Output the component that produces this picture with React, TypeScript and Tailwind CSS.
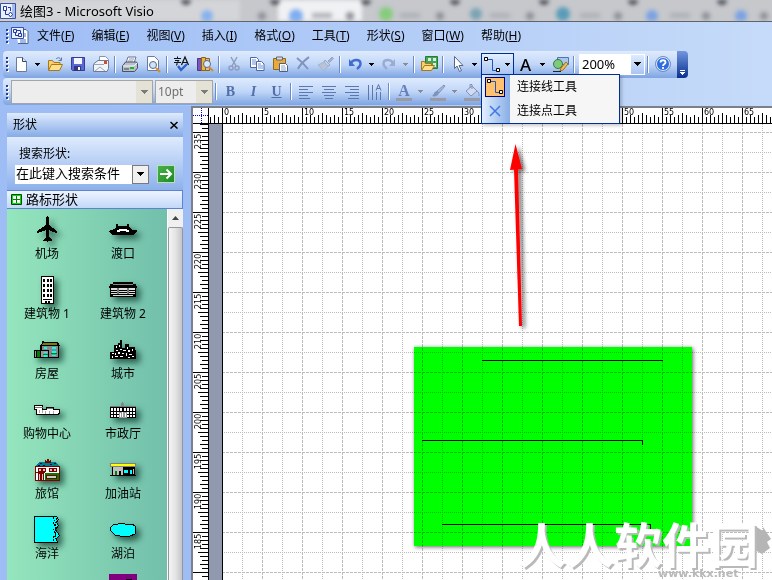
import { ReactNode } from "react";
import clsx from "clsx";

const menus = [
  { label: "文件", hotkey: "F" },
  { label: "编辑", hotkey: "E" },
  { label: "视图", hotkey: "V" },
  { label: "插入", hotkey: "I" },
  { label: "格式", hotkey: "O" },
  { label: "工具", hotkey: "T" },
  { label: "形状", hotkey: "S" },
  { label: "窗口", hotkey: "W" },
  { label: "帮助", hotkey: "H" },
];

const PAGE_LEFT = 13;
const rulerX = Array.from({ length: 14 }, (_, i) => i * 5);
const rulerY = Array.from({ length: 11 }, (_, i) => 235 - i * 5);

function Icon({ children, size = 18 }: { children: ReactNode; size?: number }) {
  return (
    <svg width={size} height={size} viewBox={`0 0 ${size} ${size}`} fill="none" aria-hidden="true">
      {children}
    </svg>
  );
}

function Caret({ color = "#000" }: { color?: string }) {
  return (
    <svg width="5" height="3" viewBox="0 0 5 3" shapeRendering="crispEdges" aria-hidden="true">
      <path d="M0 0h5v1H0zM1 1h3v1H1zM2 2h1v1H2z" fill={color} />
    </svg>
  );
}

function WideCaret({ color = "#000" }: { color?: string }) {
  return (
    <svg width="7" height="4" viewBox="0 0 7 4" shapeRendering="crispEdges" aria-hidden="true">
      <path d="M0 0h7v1H0zM1 1h5v1H1zM2 2h3v1H2zM3 3h1v1H3z" fill={color} />
    </svg>
  );
}

function ToolButton({ label, children }: { label: string; children: ReactNode }) {
  return (
    <button type="button" aria-label={label} title={label} className="flex h-6 w-[23px] shrink-0 items-center justify-center">
      {children}
    </button>
  );
}

function DropButton({ label, disabled }: { label: string; disabled?: boolean }) {
  return (
    <button type="button" aria-label={label} className="flex h-5 w-[11px] shrink-0 items-center justify-center">
      <Caret color={disabled ? "#8b8b95" : "#000"} />
    </button>
  );
}

function Separator() {
  return (
    <div className="flex w-[6px] shrink-0 justify-center">
      <div className="h-[17px] w-[2px] border-r border-white bg-[#6a8ccb]" />
    </div>
  );
}

function Grip() {
  return (
    <svg width="6" height="16" viewBox="0 0 6 16" shapeRendering="crispEdges" className="shrink-0" aria-hidden="true">
      {[1, 5, 9, 13].map((y) => (
        <g key={y}>
          <rect x="4" y={y + 1} width="2" height="2" fill="#fff" />
          <rect x="3" y={y} width="2" height="2" fill="#27418f" />
        </g>
      ))}
    </svg>
  );
}

function AppIcon() {
  return (
    <Icon size={16}>
      <path d="M.5.500h15v15H.5z" fill="#e9effc" stroke="#3653a8" />
      <path d="M12 1h3v14h-3z" fill="#a9bdec" />
      <path d="M3.500 3.500h3v4h-3z" fill="#fff" stroke="#2038a0" />
      <path d="M5.500 8v3.500H9M8 4.500h2.500V8" stroke="#2038a0" />
      <path d="m10.500 9 2 2.500-2 2.500-2-2.500z" fill="#fff" stroke="#2038a0" />
    </Icon>
  );
}

function DocIcon() {
  return (
    <Icon>
      <path d="M5 2.500h10l2 2v12H7" fill="#fff" stroke="#4a6292" />
      <path d="M13 7h2M13 9h2M9 13h6M9 15h6" stroke="#4c70c8" />
      <path d="M.5.500h12v11H.5z" fill="#e9effc" stroke="#3653a8" />
      <path d="M2.500 2.500h3v3h-3zM7.500 6.500h3v3h-3zM4.500 6v2.500H7M6 3.500h3.500V6" stroke="#2038a0" />
    </Icon>
  );
}

const icons = {
  blank: (
    <Icon>
      <path d="M4.500 2.500h6l4 4v10h-10z" fill="#fff" stroke="#6b7ba0" />
      <path d="M10.500 2.500v4h4" fill="#dbe5f7" stroke="#33446e" />
    </Icon>
  ),
  open: (
    <Icon>
      <path d="M2.500 15V5.500h4l1.500 2h6V10" fill="#f6d06a" stroke="#a9781c" />
      <path d="m2.500 15.500 3-6h11l-3 6z" fill="#ffe08a" stroke="#a9781c" />
      <path d="M10 4c2-2 4-1.500 5 1m.5-2.500v3h-3" stroke="#5c76a8" />
    </Icon>
  ),
  save: (
    <Icon>
      <path d="M2.500 2.500h13v13h-12l-1-1z" fill="#5868d4" stroke="#383c98" />
      <path d="M5 3h8v6H5z" fill="#f5f6fb" />
      <path d="M5 11h7v5H5z" fill="#34377e" />
      <path d="M9 12h2v3H9z" fill="#fff" />
    </Icon>
  ),
  mail: (
    <Icon>
      <path d="M7.500 6V1.500h6l3 3V10" fill="#fff" stroke="#8794ad" />
      <path d="M1.500 9 6 5.500h10.500v8L15 16.500H1.500z" fill="#f1f3f8" stroke="#6f7b96" />
      <path d="M1.500 9.500H12M3 16l5-4 5 4" stroke="#9aa5ba" />
      <path d="M12 6h3v3h-3z" fill="#d34a34" />
    </Icon>
  ),
  print: (
    <Icon>
      <path d="m5 8 2-6h8l-2 6z" fill="#fff" stroke="#6b7590" />
      <path d="M8 4h5M7 6h5" stroke="#8d97b0" />
      <path d="m1.500 11 3-4h11l1 2v4l-3 3.500h-12z" fill="#b9c0cc" stroke="#4a5163" />
      <path d="M2 11h11l3-3" stroke="#f4f6fa" />
      <path d="M9 12h4v2H9z" fill="#22b322" />
      <path d="M3 14h5" stroke="#3f4658" />
    </Icon>
  ),
  preview: (
    <Icon>
      <path d="M3.500 1.500h7l4 4v10h-11z" fill="#fff" stroke="#6b7ba0" />
      <circle cx="9" cy="10" r="3.500" fill="#cfe4f8" stroke="#55698f" />
      <path d="m12 13 4 4" stroke="#d98a2b" strokeWidth="2" />
    </Icon>
  ),
  spelling: (
    <Icon>
      <path d="M1 3.500h7M4.500 1.500v2M2 5.500h4l-2 2v2.500H3M1 7.500h7" stroke="#111" />
      <path d="m8.500 10 3.500-8 3.500 8M10 7.500h4" stroke="#111" strokeWidth="1.200" />
      <path d="m5 11 3 4 6-6" stroke="#2f62c8" strokeWidth="2.400" />
    </Icon>
  ),
  research: (
    <Icon>
      <path d="M1.500 3.500h4v12h-4z" fill="#7a58b8" stroke="#4c3880" />
      <path d="M5.500 2.500h4v13h-4z" fill="#efb43d" stroke="#8d6215" />
      <path d="M9.500 3.500h4v12h-4z" fill="#d8c090" stroke="#8d6215" />
      <circle cx="11" cy="9" r="3.500" fill="#d8ebfb" stroke="#55698f" />
      <path d="m13 12 4 4" stroke="#d98a2b" strokeWidth="2" />
    </Icon>
  ),
  cut: (
    <Icon>
      <path d="m6 2 5 9M12 2l-5 9" stroke="#8e9dbf" strokeWidth="1.500" />
      <circle cx="6" cy="13" r="2" stroke="#8e9dbf" strokeWidth="1.500" />
      <circle cx="12" cy="13" r="2" stroke="#8e9dbf" strokeWidth="1.500" />
    </Icon>
  ),
  copy: (
    <Icon>
      <path d="M2.500 2.500h6l2 2v8h-8z" fill="#fff" stroke="#4a68a8" />
      <path d="M4 5h4M4 7h4M4 9h4" stroke="#6d8fd6" />
      <path d="M8.500 6.500h5l2.500 2.500v6.500H8.500z" fill="#fff" stroke="#4a68a8" />
      <path d="M10 9h3M10 11h5M10 13h5" stroke="#6d8fd6" />
    </Icon>
  ),
  paste: (
    <Icon>
      <path d="M2.500 3.500h12v11h-12z" fill="#e8ab3a" stroke="#936818" />
      <path d="M5.500 2h6v3h-6z" fill="#d8dce6" stroke="#666" />
      <path d="M8.500 8.500h6l2 2v6h-8z" fill="#fff" stroke="#4a5f8c" />
      <path d="M10 11h4M10 13h5M10 15h5" stroke="#8ea3cf" />
    </Icon>
  ),
  remove: (
    <Icon>
      <path d="M3 3c4 3 7 6 11 11M15 2C10 6 6 9 4 14" stroke="#8094c0" strokeWidth="2" />
    </Icon>
  ),
  brush: (
    <Icon>
      <path d="m11 6 4-4 1.500 1.500-4 4z" fill="#a6b3ce" stroke="#98a6c4" />
      <path d="m8 5 5 5-2 1-4-4z" fill="#c7d0e2" stroke="#98a6c4" />
      <path d="m7 7 4 4-4 5-6-6z" fill="#b8c3da" stroke="#a6b3ce" />
    </Icon>
  ),
  undo: (
    <Icon>
      <path d="M5 8c2-4 9-4 9.500 0 .5 3-1 4-3.500 6" stroke="#3f6dd0" strokeWidth="2.400" />
      <path d="M3 4v7h6z" fill="#3f6dd0" />
    </Icon>
  ),
  redo: (
    <Icon>
      <path d="M13 8c-2-4-9-4-9.500 0-.5 3 1 4 3.500 6" stroke="#9aacd2" strokeWidth="2.400" />
      <path d="M15 4v7H9z" fill="#9aacd2" />
    </Icon>
  ),
  stencils: (
    <Icon>
      <path d="M5.500 1.500h12v12h-12z" fill="#44a55a" stroke="#267a3c" />
      <path d="M8 3h3v3H8zM13 3h3v3h-3zM13 8h3v4h-3z" fill="#d5f1da" />
      <path d="M1.500 15V6.500h3l1 2h6V10" fill="#f6d06a" stroke="#a9781c" />
      <path d="m1.500 15.500 3-5h10l-3 5z" fill="#ffe08a" stroke="#a9781c" />
    </Icon>
  ),
  pointer: (
    <Icon>
      <path d="M5.500 1.500v12l2.500-2.500 2.500 5.500 2-1-2.500-5h4z" fill="#fff" stroke="#56668c" />
    </Icon>
  ),
  connector: (
    <Icon>
      <path d="M5 3.500h4.500v11H13" stroke="#2358b8" />
      <path d="M1.500 1.500h3v3h-3zM13.500 12.500h3v3h-3z" fill="#fff" stroke="#000" />
    </Icon>
  ),
  drawing: (
    <Icon>
      <path d="M6.500 2.500h11v7h-11z" fill="#a9c6ef" stroke="#4d74b4" />
      <circle cx="7" cy="9" r="4.500" fill="#7fc97a" stroke="#2f7d3c" />
      <path d="m10 13 5-6 2 2-5 6-3 1z" fill="#f4bd5c" stroke="#9c6f24" />
      <path d="M2 16.500h8" stroke="#222" />
    </Icon>
  ),
  help: (
    <Icon>
      <circle cx="9" cy="9" r="6.500" fill="#2f6de0" stroke="#e8f0ff" />
      <circle cx="9" cy="9" r="7.500" stroke="#6b8cc8" />
      <path d="M6.500 7.500c0-3 5-3 5 0 0 1.500-2.500 1.500-2.500 3.500M9 12v2" stroke="#fff" strokeWidth="1.800" />
    </Icon>
  ),
  alignLeft: (
    <Icon>
      <path d="M2 3.500h14M2 6.500h9M2 9.500h14M2 12.500h9M2 15.500h11" stroke="#5c77ab" />
    </Icon>
  ),
  alignCenter: (
    <Icon>
      <path d="M2 3.500h14M4 6.500h10M2 9.500h14M4 12.500h10M5 15.500h8" stroke="#5c77ab" />
    </Icon>
  ),
  alignRight: (
    <Icon>
      <path d="M2 3.500h14M7 6.500h9M2 9.500h14M7 12.500h9M5 15.500h11" stroke="#5c77ab" />
    </Icon>
  ),
  vertical: (
    <Icon>
      <path d="M2.500 2v15M6.500 2v15M10.500 9v8M14.500 9v8" stroke="#5c77ab" />
      <path d="m10 7.500 2.500-6 2.500 6M11 5.500h3" stroke="#5c77ab" />
    </Icon>
  ),
  fontColor: (
    <Icon>
      <path d="M1 15h16v3H1z" fill="#9b9ba3" />
      <text x="9" y="13" textAnchor="middle" fill="#6580b5" className="font-['Liberation_Serif'] text-[16px] font-bold">A</text>
    </Icon>
  ),
  lineColor: (
    <Icon>
      <path d="M1 15h16v3H1z" fill="#9b9ba3" />
      <path d="m8 8 7-6 1 1-6 7z" fill="#a9b7d4" stroke="#8495bd" />
      <path d="M3 13c2-1 2-5 5-5l2 2c-1 3-4 4-7 3z" fill="#7f92bd" />
    </Icon>
  ),
  fillColor: (
    <Icon>
      <path d="M1 15h16v3H1z" fill="#9b9ba3" />
      <path d="m3 8 6-5 5 5-6 5z" fill="#d3dcee" stroke="#7f92bd" />
      <path d="M9 6V1.500H7V5M14 8c2 1 2 3 2 5" stroke="#7f92bd" />
    </Icon>
  ),
};

type Stencil = { name: string; width: number; height: number; art: ReactNode };

const stencils: Stencil[] = [
  {
    name: "机场",
    width: 21,
    height: 27,
    art: (
      <path d="M10 0h1v1h1v8l8 6v2h-1l-7-3v7l3 3v1h-4v1h-1v-1H6v-1l3-3v-7l-8 3H0v-2l9-6V1h1z" fill="#000" />
    ),
  },
  {
    name: "渡口",
    width: 28,
    height: 12,
    art: (
      <>
        <path d="M7 0h2v2h9V0h2v3l3 3h5v1l-4 4H4L0 8V7l5-2 2-2z" fill="#000" />
        <path d="M10 5h8v1h2v2h-3V7h-6v1H8V6h2z" fill="#fff" />
      </>
    ),
  },
  {
    name: "建筑物 1",
    width: 13,
    height: 28,
    art: (
      <>
        <path d="M0 0h13v28H0z" fill="#000" />
        <path d="M1 1h11v26H1z" fill="#fff" />
        {[3, 8, 13, 18].map((y) => (
          <path key={y} d={`M2 ${y}h2v3H2zM6 ${y}h2v3H6zM9 ${y}h2v3H9z`} fill="#000" />
        ))}
        <path d="M2 23h9v1H2zM4 25h2v2H4zM7 25h2v2H7z" fill="#000" />
      </>
    ),
  },
  {
    name: "建筑物 2",
    width: 28,
    height: 16,
    art: (
      <>
        <path d="M4 0h20v2h3v2h1v2h-1v9H1V6H0V4h1V2h3z" fill="#000" />
        <path d="M4 2h20v1H4z" fill="#888" />
        <path d="M2 6h24v2H2zM2 9h24v1H2zM2 11h24v1H2zM4 13h20v1H4z" fill="#ddd" />
        <path d="M8 6h2v6H8zM18 6h2v6h-2z" fill="#777" />
      </>
    ),
  },
  {
    name: "房屋",
    width: 26,
    height: 17,
    art: (
      <>
        <path d="M6 4h19v13H6z" fill="#000" />
        <path d="M8 5h16v11H8z" fill="#888" />
        <path d="M8 0h2v1h14l2 4H6l2-3z" fill="#000" />
        <path d="M9 2h14v2H8z" fill="#7d7d00" />
        <path d="M0 9h15v8H0z" fill="#000" />
        <path d="M1 10h1v6H1zM7 10h7v6H7z" fill="#999" />
        <path d="M3 10h3v6H3z" fill="#008000" />
        <path d="M10 6h3v2h-3zM18 6h4v2h-4zM10 11h3v1h-3zM10 14h3v2h-3zM18 10h4v2h-4zM18 14h4v1h-4z" fill="#0ff" />
        <path d="M9 13h5v1H9zM17 12h6v1h-6z" fill="#008000" />
      </>
    ),
  },
  {
    name: "城市",
    width: 26,
    height: 19,
    art: (
      <>
        <path d="M0 12h4V5h4V3h2V0h2v8h3V4h4v3h6v3h1v9H0z" fill="#000" />
        <path
          d="M6 6h1v2H6zM9 5h1v2H9zM6 10h2v1H6zM10 9h2v1h-2zM2 13h2v1H2zM5 13h1v2H5zM2 16h1v2H2zM5 16h3v1H5zM8 12h2v2H8zM13 10h3v1h-3zM17 7h1v2h-1zM18 10h2v2h-2zM22 9h1v2h-1zM12 13h2v1h-2zM16 13h1v3h-1zM19 14h3v1h-3zM10 16h3v1h-3zM18 17h2v1h-2zM22 16h2v1h-2z"
          fill="#fff"
        />
      </>
    ),
  },
  {
    name: "购物中心",
    width: 26,
    height: 10,
    art: (
      <>
        <path d="M.5.500h8v4h4v-2h7v2h6v4l-2 1H2.500v-5h-2z" fill="#fff" stroke="#000" />
        <path d="M1 2h8v1H1zM13 3h6v1h-6z" fill="#777" />
        <path d="M5 5v3M8 5v3M11 6v3M15 6v3M19 6v3" stroke="#aaa" />
      </>
    ),
  },
  {
    name: "市政厅",
    width: 26,
    height: 16,
    art: (
      <>
        <path d="M12 0h1v1h1v3h-3V1h1z" fill="#888" />
        <path d="M0 4h26v12H0z" fill="#000" />
        <path d="M0 4h26v1H0z" fill="#777" />
        {[1, 4, 7, 10, 14, 17, 20, 23].map((x) => (
          <path key={x} d={`M${x} 6h2v3h-2zM${x} 10h2v2h-2zM${x} 13h2v2h-2z`} fill="#fff" />
        ))}
        <path d="M9 10h8v6H9z" fill="#999" />
        <path d="M10 11h1v4h-1zM12 10h1v5h-1zM15 11h1v4h-1z" fill="#fff" />
      </>
    ),
  },
  {
    name: "旅馆",
    width: 25,
    height: 22,
    art: (
      <>
        <path d="M4 3h17l3 4H1z" fill="#008080" />
        <path d="M5 4h2v1H5zM10 3h2v1h-2zM15 5h2v1h-2zM19 4h2v1h-2zM3 6h2v1H3zM8 6h2v1H8z" fill="#000080" />
        <path d="M10 1h1v1h1V0h2v2h1V1h1v3h-6z" fill="#800000" />
        <path d="M0 7h25v15H0z" fill="#800000" />
        <path d="M1 8h23v13H1z" fill="#fff" />
        <path d="M10 14h14v7H10z" fill="#008000" />
        <path d="M3 9h8v4H3zM14 9h8v4h-8zM3 14h6v7H3zM11 16h11v4H11zM1 13h9v1H1z" fill="#800000" />
        <path d="M4 10h2v2H4zM8 10h2v2H8zM15 10h2v2h-2zM19 10h2v2h-2zM4 15h1v6H4zM7 15h1v6H7zM12 17h9v2h-9z" fill="#ccc" />
      </>
    ),
  },
  {
    name: "加油站",
    width: 26,
    height: 13,
    art: (
      <>
        <path d="M0 0h26v4H0z" fill="#808080" />
        <path d="M1 1h24v2H1z" fill="#ff0" />
        <path d="M2 4h11v8H2z" fill="#c0c0c0" />
        <path d="M13 4h12v8H13zM0 12h26v1H0zM2 4h1v9H2zM9 8h2v4H9z" fill="#000" />
        <path d="M14 7h4v3h-4zM20 7h2v4h-2z" fill="#0ff" />
        <path d="M5 8h2v4H5z" fill="#008000" />
        <path d="M23 6h1v5h-1z" fill="#c0c0c0" />
      </>
    ),
  },
  {
    name: "海洋",
    width: 26,
    height: 27,
    art: (
      <>
        <path d="M.5.500h22l2 3-2 3 2 3-3 4 2 3 2 3-3 3 1 4H.5z" fill="#0ff" stroke="#000" />
        <path d="m19 1 2 3-2 3 3 4-3 3 3 4-3 4v4M22 2v4l-1 2 1 3-1 3 1 4-1 5" stroke="#000" strokeDasharray="2 1" />
      </>
    ),
  },
  {
    name: "湖泊",
    width: 28,
    height: 16,
    art: <path d="M1 6 4 3l5-1 3-1 4 1h7l3 2 1 4-1 4-5 2-5 1-5-1-5-1-4-4z" fill="#0ff" stroke="#000" />,
  },
];

function TitleBar() {
  return (
    <header className="relative h-[22px] shrink-0 overflow-hidden border-b border-[#5f6470] bg-[#c6c8cc]">
      <svg className="absolute inset-0 h-full w-full blur-[2px]" aria-hidden="true">
        <rect x="-10" y="-6" width="250" height="34" fill="#d4d5d8" />
        <rect x="278" y="-4" width="84" height="34" rx="8" fill="#f0f1f3" />
        <circle cx="207" cy="16" r="6" fill="#86b2ee" />
        <circle cx="296" cy="16" r="7" fill="#7fadf0" />
        <circle cx="386" cy="14" r="7" fill="#86cc7c" />
        <circle cx="476" cy="14" r="6" fill="#7ba3b4" />
        <circle cx="563" cy="14" r="7" fill="#5a9cb8" />
        <circle cx="652" cy="16" r="6" fill="#7ba2e2" />
        <circle cx="741" cy="16" r="6" fill="#7ba2e2" />
        {[186, 275, 366, 455, 544, 633, 722].map((x) => (
          <circle key={x} cx={x} cy="0" r="5" fill="#45484f" />
        ))}
        {[262, 350, 440, 530, 618, 706, 764].map((x) => (
          <circle key={x} cx={x} cy="16" r="4" fill="#8e9197" />
        ))}
        {[322, 410, 500, 590, 680].map((x) => (
          <rect key={x} x={x - 10} y="13" width="20" height="5" fill="#aeb1b6" />
        ))}
      </svg>
      <div className="relative flex h-[21px] items-center gap-1">
        <AppIcon />
        <h1 className="text-[13px] leading-5 whitespace-nowrap">绘图3 - Microsoft Visio</h1>
      </div>
    </header>
  );
}

function MenuBar() {
  return (
    <nav className="flex h-[29px] shrink-0 items-center pb-[2px] pl-[3px] text-[12px]">
      <Grip />
      <div className="ml-[2px] w-[26px]">
        <DocIcon />
      </div>
      <div className="flex gap-[17px]">
        {menus.map((menu) => (
          <button key={menu.label} type="button" className="whitespace-nowrap">
            {menu.label}(<u>{menu.hotkey}</u>)
          </button>
        ))}
      </div>
    </nav>
  );
}

function ConnectorMenu() {
  return (
    <div className="absolute top-5 -left-px z-10 w-[139px] border border-[#002d96] bg-[#f6f6f6] shadow-[2px_2px_3px_rgba(0,0,0,0.2)]" role="menu">
      <button type="button" role="menuitem" className="flex h-6 w-full items-center bg-linear-to-r from-[#e3efff] to-[#88aee5] bg-[length:28px_100%] bg-no-repeat text-[12px]">
        <span className="ml-[3px] flex h-5 w-5 items-center justify-center border border-[#000080] bg-[#ffc06f]">{icons.connector}</span>
        <span className="ml-3">连接线工具</span>
      </button>
      <button type="button" role="menuitem" className="flex h-6 w-full items-center bg-linear-to-r from-[#e3efff] to-[#88aee5] bg-[length:28px_100%] bg-no-repeat text-[12px]">
        <span className="ml-[3px] flex h-5 w-5 items-center justify-center">
          <Icon size={12}>
            <path d="m1 1 10 10M11 1 1 11" stroke="#3f78e8" strokeWidth="1.500" />
          </Icon>
        </span>
        <span className="ml-3">连接点工具</span>
      </button>
    </div>
  );
}

function StandardToolbar() {
  return (
    <div className="flex h-[27px] shrink-0 pl-[3px]">
      <div className="flex items-center rounded-l-sm bg-linear-to-b from-[#dfebfd] via-[#c0d6f8] to-[#7ea4e2] pb-px">
        <Grip />
        <ToolButton label="新建">{icons.blank}</ToolButton>
        <DropButton label="新建选项" />
        <ToolButton label="打开">{icons.open}</ToolButton>
        <ToolButton label="保存">{icons.save}</ToolButton>
        <ToolButton label="邮件">{icons.mail}</ToolButton>
        <Separator />
        <ToolButton label="打印">{icons.print}</ToolButton>
        <ToolButton label="打印预览">{icons.preview}</ToolButton>
        <Separator />
        <ToolButton label="拼写检查">{icons.spelling}</ToolButton>
        <ToolButton label="信息检索">{icons.research}</ToolButton>
        <Separator />
        <ToolButton label="剪切">{icons.cut}</ToolButton>
        <ToolButton label="复制">{icons.copy}</ToolButton>
        <ToolButton label="粘贴">{icons.paste}</ToolButton>
        <ToolButton label="删除">{icons.remove}</ToolButton>
        <ToolButton label="格式刷">{icons.brush}</ToolButton>
        <Separator />
        <ToolButton label="撤消">{icons.undo}</ToolButton>
        <DropButton label="撤消选项" />
        <ToolButton label="恢复">{icons.redo}</ToolButton>
        <DropButton label="恢复选项" disabled />
        <Separator />
        <ToolButton label="形状模具">{icons.stencils}</ToolButton>
        <Separator />
        <ToolButton label="指针工具">{icons.pointer}</ToolButton>
        <DropButton label="指针选项" />
        <div className="relative ml-px flex h-[22px] items-center border border-b-0 border-[#002d96] bg-linear-to-b from-[#e3efff] to-[#a5c3f2]">
          <button type="button" aria-label="连接线工具" className="flex w-5 justify-center">
            {icons.connector}
          </button>
          <DropButton label="连接线选项" />
          <ConnectorMenu />
        </div>
        <ToolButton label="文本工具">
          <span className="font-['Noto_Sans',sans-serif] text-[17px] leading-none font-medium">A</span>
        </ToolButton>
        <DropButton label="文本选项" />
        <ToolButton label="绘图工具">{icons.drawing}</ToolButton>
        <Separator />
        <div className="ml-[2px] grid h-[21px] w-[66px] items-center border border-white bg-white">
          <select aria-label="显示比例" className="col-start-1 row-start-1 h-full w-full appearance-none pl-[2px] text-[13px] leading-4">
            <option>200%</option>
          </select>
          <span className="pointer-events-none col-start-1 row-start-1 flex h-full w-[13px] items-center justify-center justify-self-end bg-linear-to-b from-[#dfebfd] to-[#a9c5f1]">
            <WideCaret />
          </span>
        </div>
        <Separator />
        <ToolButton label="帮助">{icons.help}</ToolButton>
        <div className="w-[3px]" />
      </div>
      <button type="button" aria-label="工具栏选项" className="flex w-[11px] flex-col items-center justify-end gap-px rounded-r-sm bg-linear-to-b from-[#7396dd] to-[#0a2f90] pb-[3px]">
        <span className="h-px w-[5px] bg-white" />
        <Caret color="#fff" />
      </button>
    </div>
  );
}

function FormatToolbar() {
  return (
    <div className="mb-px flex h-[27px] shrink-0 items-center pl-[3px]">
      <div className="flex h-full items-center rounded-l-sm bg-linear-to-b from-[#dfebfd] via-[#c0d6f8] to-[#7ea4e2]">
        <Grip />
        <div className="ml-[2px] grid h-6 w-[142px] items-center border border-[#a5a5a5] bg-[#ededed]">
          <select aria-label="字体" disabled className="col-start-1 row-start-1 h-full w-full appearance-none text-[12px]">
            <option />
          </select>
          <span className="pointer-events-none col-start-1 row-start-1 flex h-full w-4 items-center justify-center justify-self-end bg-[#e4e2d5]">
            <WideCaret color="#7b7b7b" />
          </span>
        </div>
        <div className="ml-[2px] grid h-6 w-[58px] items-center border border-[#a5a5a5] bg-[#ededed]">
          <select aria-label="字号" disabled className="col-start-1 row-start-1 h-full w-full appearance-none pl-[2px] text-[12px] leading-4 text-[#6f6f6f]">
            <option>10pt</option>
          </select>
          <span className="pointer-events-none col-start-1 row-start-1 flex h-full w-4 items-center justify-center justify-self-end bg-[#e4e2d5]">
            <WideCaret color="#7b7b7b" />
          </span>
        </div>
        <Separator />
        <div className="flex font-['Liberation_Serif',serif] text-[14px] font-bold text-[#526fa8]">
          <ToolButton label="加粗">B</ToolButton>
          <ToolButton label="倾斜">
            <i>I</i>
          </ToolButton>
          <ToolButton label="下划线">
            <u>U</u>
          </ToolButton>
        </div>
        <Separator />
        <ToolButton label="左对齐">{icons.alignLeft}</ToolButton>
        <ToolButton label="居中">{icons.alignCenter}</ToolButton>
        <ToolButton label="右对齐">{icons.alignRight}</ToolButton>
        <ToolButton label="文字方向">{icons.vertical}</ToolButton>
        <Separator />
        <ToolButton label="字体颜色">{icons.fontColor}</ToolButton>
        <DropButton label="字体颜色选项" disabled />
        <ToolButton label="线条颜色">{icons.lineColor}</ToolButton>
        <DropButton label="线条颜色选项" disabled />
        <ToolButton label="填充颜色">{icons.fillColor}</ToolButton>
        <DropButton label="填充颜色选项" disabled />
      </div>
    </div>
  );
}

function ShapesPanel() {
  return (
    <aside className="flex w-[191px] shrink-0 flex-col bg-[#9ebdf5] pt-[7px] pr-2 pl-[7px]">
      <div className="flex h-6 shrink-0 items-center justify-between bg-linear-to-b from-[#dfebfd] to-[#86abe6] pr-px pl-[6px]">
        <h2 className="text-[12px]">形状</h2>
        <button type="button" aria-label="关闭" className="flex h-4 w-4 items-center justify-center">
          <Icon size={8}>
            <path d="m.5 1 7 6.500M7.500 1l-7 6.500" stroke="#000" strokeWidth="1.500" />
          </Icon>
        </button>
      </div>
      <div className="h-[53px] shrink-0 bg-linear-to-b from-[#dfebfd] to-[#8db0eb] pt-[9px] pl-2">
        <label htmlFor="shape-search" className="block pl-1 text-[12px] leading-4">
          搜索形状:
        </label>
        <div className="mt-[2px] flex h-5 items-center">
          <input id="shape-search" defaultValue="在此键入搜索条件" className="h-[19px] w-[117px] bg-white pl-px text-[13px]" />
          <button type="button" aria-label="最近的搜索" className="flex h-[19px] w-[17px] items-center justify-center border border-[#7a7a7a] bg-[#f0f0f0]">
            <WideCaret />
          </button>
          <button type="button" aria-label="搜索" className="ml-2 flex h-[18px] w-[18px] items-center justify-center border border-[#b9e0b5] bg-linear-to-br from-[#48b24a] to-[#1d8a22]">
            <Icon size={14}>
              <path d="M1 7h11M7.500 2.500 12 7l-4.500 4.500" stroke="#fff" strokeWidth="2" />
            </Icon>
          </button>
        </div>
      </div>
      <button type="button" className="flex h-[19px] shrink-0 items-center gap-1 border-y border-r border-[#5c83cf] bg-linear-to-b from-[#edf4ff] to-[#c3d8f8] pl-1 text-[13px]">
        <Icon size={11}>
          <path d="M.5.500h10v10H.5z" fill="#00e000" stroke="#004b00" />
          <path d="M2 2h7v7H2z" fill="#fff" />
          <path d="M5.500 2v7M2 5.500h7" stroke="#008000" />
        </Icon>
        路标形状
      </button>
      <div className="flex min-h-0 flex-1">
        <div className="min-w-0 flex-1 overflow-hidden bg-linear-to-r from-[#94e6bd] to-[#72bfab] pt-[2px] pl-[2px]">
          <ul className="grid grid-cols-[76px_76px]">
            {stencils.map((stencil) => (
              <li key={stencil.name} className="flex h-[60px] flex-col items-center">
                <span className="flex h-[37px] items-center">
                  <svg
                    width={stencil.width}
                    height={stencil.height}
                    viewBox={`0 0 ${stencil.width} ${stencil.height}`}
                    fill="none"
                    shapeRendering="crispEdges"
                    className="drop-shadow-[4px_4px_3px_rgba(0,40,30,0.65)]"
                    aria-hidden="true"
                  >
                    {stencil.art}
                  </svg>
                </span>
                <span className="text-[12px] leading-3 whitespace-nowrap">{stencil.name}</span>
              </li>
            ))}
            <li className="col-start-2 flex justify-center pt-[3px]">
              <svg width="28" height="28" viewBox="0 0 28 28" shapeRendering="crispEdges" aria-hidden="true">
                <path d="M0 0h28v28H0z" fill="#800080" />
                <path d="M17 5h5v2h-5z" fill="#ff0" stroke="#000" />
              </svg>
            </li>
          </ul>
        </div>
        <div className="flex w-4 shrink-0 flex-col border-l border-white bg-[#f0f0f0]">
          <button type="button" aria-label="向上滚动" className="flex h-[18px] items-center justify-center">
            <svg width="7" height="4" viewBox="0 0 7 4" aria-hidden="true">
              <path d="M0 4 3.500 0 7 4z" fill="#444" />
            </svg>
          </button>
          <div className="flex-1 rounded-t-xs border border-b-0 border-[#979797] bg-linear-to-r from-[#f5f5f5] via-[#e4e4e6] to-[#c4c5c8]" />
        </div>
      </div>
    </aside>
  );
}

function HorizontalRuler() {
  return (
    <svg className="h-4 w-full bg-white" shapeRendering="crispEdges" role="img" aria-label="水平标尺">
      {Array.from({ length: 300 }, (_, i) => i - 3).map((i) => {
        const height = i % 10 === 0 ? 15 : i % 5 === 0 ? 10 : i % 2 === 0 ? 8 : 6;
        return <rect key={i} x={PAGE_LEFT + i * 4} y={15 - height} width="1" height={height} fill="#000" />;
      })}
      {rulerX.map((value, i) => (
        <text key={value} x={PAGE_LEFT + i * 40 + 2} y="7" className="font-['DejaVu_Sans'] text-[8px]">
          {value}
        </text>
      ))}
      <rect x="0" y="15" width="100%" height="1" fill="#000" />
    </svg>
  );
}

function VerticalRuler() {
  return (
    <svg className="h-full w-4 shrink-0 bg-white" shapeRendering="crispEdges" role="img" aria-label="垂直标尺">
      {Array.from({ length: 300 }, (_, i) => i - 2).map((i) => {
        const width = i % 10 === 0 ? 15 : i % 5 === 0 ? 10 : i % 2 === 0 ? 8 : 6;
        return <rect key={i} x={15 - width} y={8 + i * 4} width={width} height="1" fill="#000" />;
      })}
      {rulerY.map((value, i) => (
        <text key={value} transform={`translate(8 ${i * 40 + 25}) rotate(-90)`} className="font-['DejaVu_Sans'] text-[8px]">
          {value}
        </text>
      ))}
      <rect x="15" y="0" width="1" height="100%" fill="#000" />
    </svg>
  );
}

function Drawing() {
  return (
    <svg className="h-full min-w-0 flex-1 bg-white" role="img" aria-label="绘图页">
      <defs>
        <pattern id="grid" width="40" height="40" patternUnits="userSpaceOnUse" x={PAGE_LEFT} y="8">
          <g stroke="#bcbcbc" shapeRendering="crispEdges">
            <path d="M.5 0v40M0 .5h40" strokeDasharray="3 1" />
            <path d="M20.500 0v40M0 20.500h40" strokeDasharray="1 1" />
          </g>
        </pattern>
        <filter id="soft" x="-20%" y="-20%" width="140%" height="140%">
          <feDropShadow dx="1" dy="1" stdDeviation="2" floodOpacity="0.6" />
        </filter>
        <filter id="arrow-shadow" x="-100%" y="-10%" width="300%" height="120%">
          <feDropShadow dx="3" dy="2" stdDeviation="2" floodOpacity="0.6" />
        </filter>
        <filter id="watermark-shadow" x="-10%" y="-10%" width="120%" height="120%">
          <feDropShadow dx="2" dy="2" stdDeviation="0" floodColor="#b9b9b9" />
        </filter>
      </defs>
      <rect x={PAGE_LEFT + 192} y="223" width="278" height="199" fill="#00ff00" filter="url(#soft)" />
      <rect width="100%" height="100%" fill="url(#grid)" className="mix-blend-multiply" />
      <g stroke="#000" fill="none" shapeRendering="crispEdges">
        <path d="M273 236.500h181" />
        <path d="M213 316.500h220.500v4" />
        <path d="M233 400.500h208.500v4" />
      </g>
      <g filter="url(#arrow-shadow)" fill="#f00">
        <path d="M305 45h4l4 157h-3z" />
        <path d="m306.500 20 6.500 25-12 1z" />
      </g>
      <g className="font-['Noto_Sans_CJK_SC',sans-serif] font-bold">
        <path d="M546 402l8 5v-4l8 12-4 3 3 6-8 6-7-4z" fill="#b5b5b5" />
        <text x="309" y="439" className="text-[48px]" fill="#fff" filter="url(#watermark-shadow)">
          人人软件园
        </text>
        <text x="449" y="453" className="font-['DejaVu_Sans'] text-[11px]" fill="#b9b9b9">
          www.kkx.net
        </text>
      </g>
      <rect width={PAGE_LEFT} height="100%" fill="#9199ae" />
      <rect x={PAGE_LEFT} width="1" height="100%" fill="#000" />
    </svg>
  );
}

export default function App() {
  return (
    <main
      lang="zh-CN"
      className={clsx(
        "flex h-screen flex-col overflow-hidden bg-linear-to-r from-[#9ebdf5] to-[#c6dbf9] text-black",
        "font-['Noto_Sans','Noto_Sans_CJK_SC',sans-serif]",
      )}
    >
      <TitleBar />
      <MenuBar />
      <StandardToolbar />
      <FormatToolbar />
      <section className="flex min-h-0 flex-1">
        <ShapesPanel />
        <div className="flex min-w-0 flex-1 flex-col border-t-2 border-l-2 border-[#7d8088]">
          <div className="flex h-4 shrink-0">
            <svg width="16" height="16" className="shrink-0 bg-white" shapeRendering="crispEdges" aria-hidden="true">
              <path d="M8.500 0v16M0 7.500h16" stroke="#0000e0" strokeDasharray="1 1" />
              <path d="M15.500 0v16M0 15.500h16" stroke="#000" />
            </svg>
            <div className="min-w-0 flex-1">
              <HorizontalRuler />
            </div>
          </div>
          <div className="flex min-h-0 flex-1">
            <VerticalRuler />
            <Drawing />
          </div>
        </div>
      </section>
    </main>
  );
}
